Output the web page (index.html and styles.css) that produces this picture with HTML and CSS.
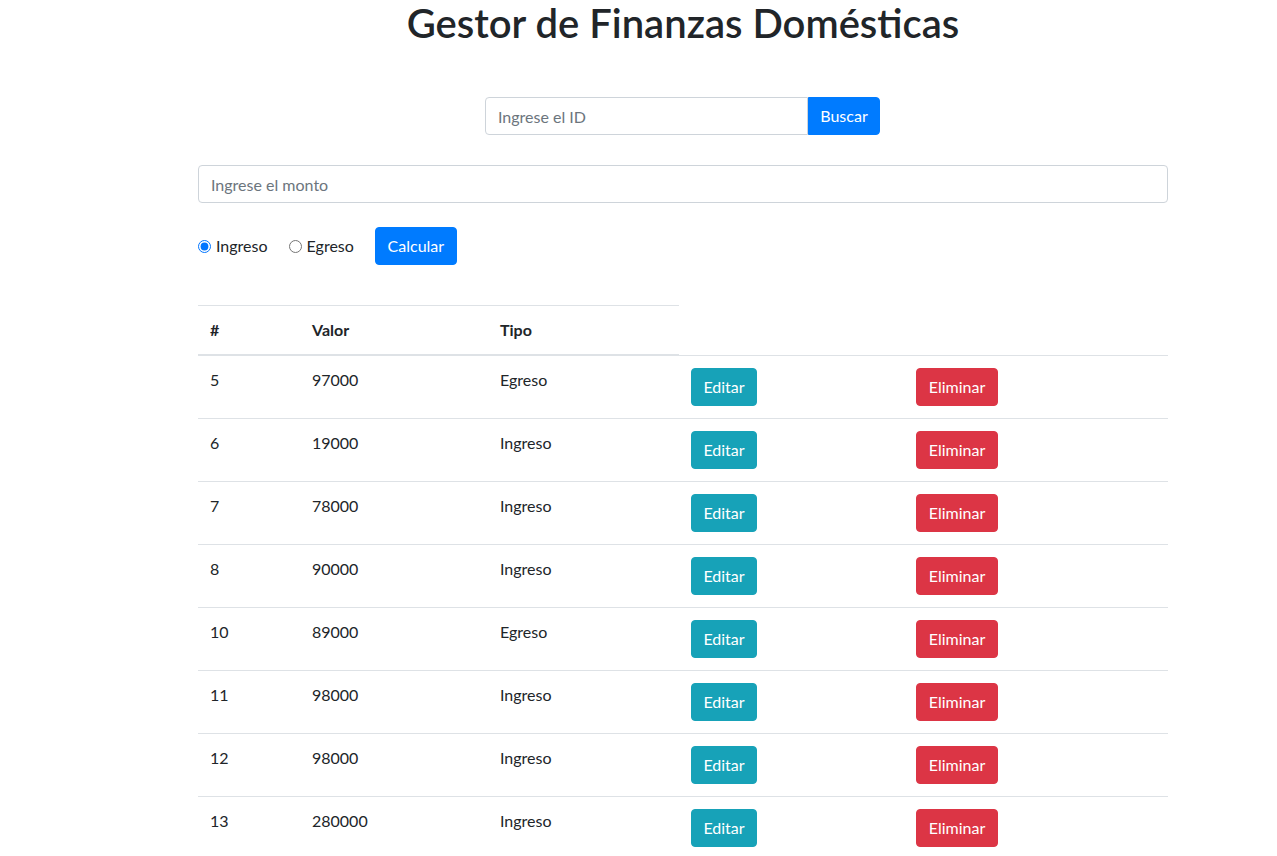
FILE: index.html
```html
<!DOCTYPE html>
<html lang="es">
<head>
<meta charset="utf-8">
<title>Gestor de Finanzas Domésticas</title>
<link rel="stylesheet" href="styles.css">
</head>
<body>
<div class="container">
  <h1 class="title">Gestor de Finanzas Domésticas</h1>
  <div class="search">
    <input class="search-input" type="text" placeholder="Ingrese el ID">
    <button class="btn btn-primary btn-search">Buscar</button>
  </div>
  <input class="monto" type="text" placeholder="Ingrese el monto">
  <div class="calc-row">
    <label class="radio"><input type="radio" name="tipo" checked> Ingreso</label>
    <label class="radio"><input type="radio" name="tipo"> Egreso</label>
    <button class="btn btn-primary btn-calc">Calcular</button>
  </div>
  <table class="table">
    <colgroup>
      <col class="c1"><col class="c2"><col class="c3"><col class="c4"><col class="c5">
    </colgroup>
    <thead>
      <tr><th>#</th><th>Valor</th><th>Tipo</th></tr>
    </thead>
    <tbody>
      <tr><td>5</td><td>97000</td><td>Egreso</td><td><button class="btn btn-info">Editar</button></td><td><button class="btn btn-danger">Eliminar</button></td></tr>
      <tr><td>6</td><td>19000</td><td>Ingreso</td><td><button class="btn btn-info">Editar</button></td><td><button class="btn btn-danger">Eliminar</button></td></tr>
      <tr><td>7</td><td>78000</td><td>Ingreso</td><td><button class="btn btn-info">Editar</button></td><td><button class="btn btn-danger">Eliminar</button></td></tr>
      <tr><td>8</td><td>90000</td><td>Ingreso</td><td><button class="btn btn-info">Editar</button></td><td><button class="btn btn-danger">Eliminar</button></td></tr>
      <tr><td>10</td><td>89000</td><td>Egreso</td><td><button class="btn btn-info">Editar</button></td><td><button class="btn btn-danger">Eliminar</button></td></tr>
      <tr><td>11</td><td>98000</td><td>Ingreso</td><td><button class="btn btn-info">Editar</button></td><td><button class="btn btn-danger">Eliminar</button></td></tr>
      <tr><td>12</td><td>98000</td><td>Ingreso</td><td><button class="btn btn-info">Editar</button></td><td><button class="btn btn-danger">Eliminar</button></td></tr>
      <tr><td>13</td><td>280000</td><td>Ingreso</td><td><button class="btn btn-info">Editar</button></td><td><button class="btn btn-danger">Eliminar</button></td></tr>
    </tbody>
  </table>
</div>
</body>
</html>
```
FILE: styles.css
```css
* { box-sizing: border-box; }
html, body { margin: 0; padding: 0; }
body {
  font-family: Lato, "Noto Sans", "Liberation Sans", sans-serif;
  font-size: 16px;
  line-height: 1.5;
  color: #212529;
  background: #fff;
}
.container {
  width: 970px;
  margin-left: 198px;
}
.title {
  margin: 0;
  font-size: 40px;
  font-weight: 600;
  line-height: 46px;
  text-align: center;
  color: #212529;
}
.search {
  display: flex;
  width: 395px;
  margin: 51px 0 0 287px;
}
.search-input, .monto {
  display: block;
  height: 38px;
  padding: 6px 12px;
  font: inherit;
  font-size: 16px;
  color: #495057;
  border: 1px solid #ced4da;
  border-radius: 4px;
  background: #fff;
}
.search-input::placeholder, .monto::placeholder { color: #6c757d; }
.search-input {
  flex: 1;
  min-width: 0;
  border-top-right-radius: 0;
  border-bottom-right-radius: 0;
}
.btn {
  display: inline-block;
  height: 38px;
  padding: 6px 12px;
  font: inherit;
  font-size: 16px;
  line-height: 24px;
  border: 1px solid transparent;
  border-radius: 4px;
  color: #fff;
  cursor: pointer;
}
.btn-primary { background: #007bff; border-color: #007bff; }
.btn-info { background: #17a2b8; border-color: #17a2b8; width: 66px; padding: 6px 0; text-align: center; }
.btn-danger { background: #dc3545; border-color: #dc3545; width: 82px; padding: 6px 0; text-align: center; }
.btn-search {
  width: 72px;
  padding: 6px 0;
  border-top-left-radius: 0;
  border-bottom-left-radius: 0;
}
.monto {
  width: 100%;
  margin-top: 30px;
}
.calc-row {
  display: flex;
  align-items: center;
  margin-top: 24px;
  height: 38px;
}
.radio {
  display: inline-flex;
  align-items: center;
  margin-right: 21px;
}
.radio input {
  margin: 0 5px 0 0;
  width: 13px;
  height: 13px;
}
.btn-calc {
  width: 82px;
  padding: 6px 0;
  text-align: center;
}
.table {
  width: 970px;
  margin-top: 40px;
  border-collapse: collapse;
  table-layout: fixed;
}
.c1 { width: 102px; }
.c2 { width: 188px; }
.c3 { width: 191px; }
.c4 { width: 225px; }
.c5 { width: 264px; }
.table th, .table td {
  padding: 12px;
  text-align: left;
  vertical-align: top;
  border-top: 1px solid #dee2e6;
}
.table th {
  font-weight: 700;
  vertical-align: bottom;
  border-bottom: 2px solid #dee2e6;
}
```
